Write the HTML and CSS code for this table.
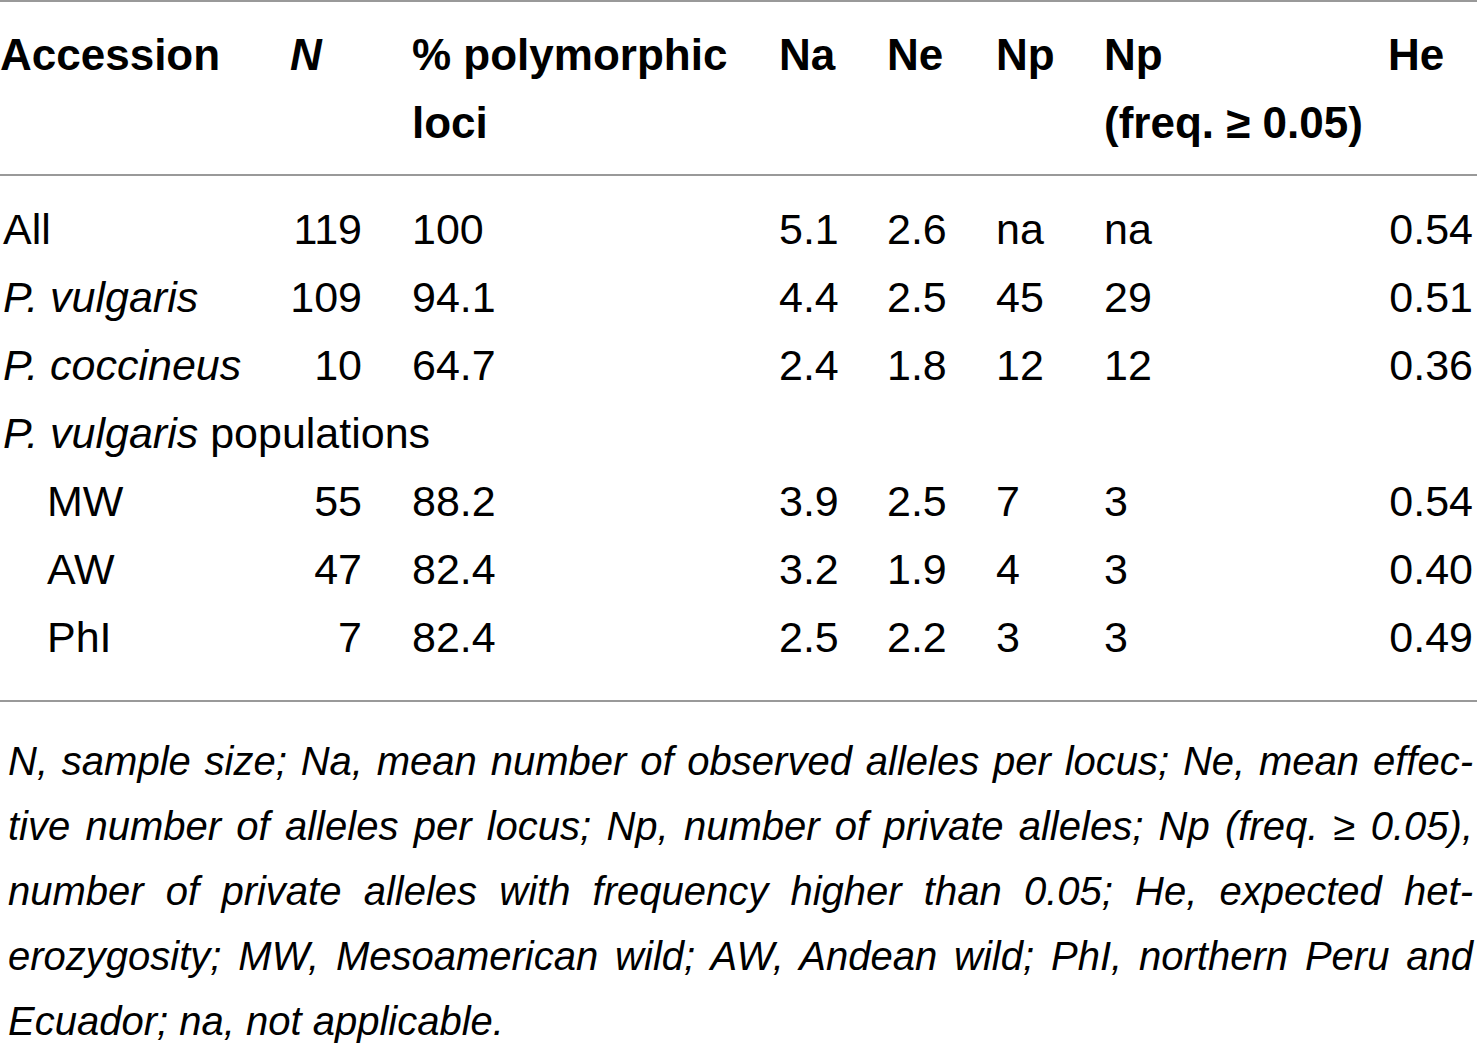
FILE: index.html
```html
<!DOCTYPE html>
<html lang="en">
<head>
    <meta charset="UTF-8">
    <meta name="viewport" content="width=device-width, initial-scale=1.0">
    <title>Genetic diversity by accession</title>
    <link rel="stylesheet" href="styles.css">
</head>
<body>

<table class="stats">
    <colgroup>
        <col class="c-acc">
        <col class="c-n">
        <col class="c-poly">
        <col class="c-na">
        <col class="c-ne">
        <col class="c-np">
        <col class="c-npf">
        <col class="c-he">
    </colgroup>
    <thead>
        <tr>
            <th class="first">Accession</th>
            <th><i>N</i></th>
            <th>% polymorphic<br>loci</th>
            <th>Na</th>
            <th>Ne</th>
            <th>Np</th>
            <th>Np<br>(freq. &ge; 0.05)</th>
            <th>He</th>
        </tr>
    </thead>
    <tbody>
        <tr>
            <td class="first">All</td>
            <td class="num">119</td>
            <td>100</td>
            <td>5.1</td>
            <td>2.6</td>
            <td>na</td>
            <td>na</td>
            <td class="num">0.54</td>
        </tr>
        <tr>
            <td class="first"><i>P. vulgaris</i></td>
            <td class="num">109</td>
            <td>94.1</td>
            <td>4.4</td>
            <td>2.5</td>
            <td>45</td>
            <td>29</td>
            <td class="num">0.51</td>
        </tr>
        <tr>
            <td class="first"><i>P. coccineus</i></td>
            <td class="num">10</td>
            <td>64.7</td>
            <td>2.4</td>
            <td>1.8</td>
            <td>12</td>
            <td>12</td>
            <td class="num">0.36</td>
        </tr>
        <tr>
            <td class="first" colspan="8"><i>P. vulgaris</i> populations</td>
        </tr>
        <tr>
            <td class="first sub">MW</td>
            <td class="num">55</td>
            <td>88.2</td>
            <td>3.9</td>
            <td>2.5</td>
            <td>7</td>
            <td>3</td>
            <td class="num">0.54</td>
        </tr>
        <tr>
            <td class="first sub">AW</td>
            <td class="num">47</td>
            <td>82.4</td>
            <td>3.2</td>
            <td>1.9</td>
            <td>4</td>
            <td>3</td>
            <td class="num">0.40</td>
        </tr>
        <tr>
            <td class="first sub">PhI</td>
            <td class="num">7</td>
            <td>82.4</td>
            <td>2.5</td>
            <td>2.2</td>
            <td>3</td>
            <td>3</td>
            <td class="num">0.49</td>
        </tr>
    </tbody>
</table>

<p class="note">N, sample size; Na, mean number of observed alleles per locus; Ne, mean effec&shy;tive number of alleles per locus; Np, number of private alleles; Np (freq.&nbsp;&ge; 0.05), number of private alleles with frequency higher than 0.05; He, expected het&shy;erozygosity; MW, Mesoamerican wild; AW, Andean wild; PhI, northern Peru and Ecuador; na, not applicable.</p>

</body>
</html>
```

FILE: styles.css
```css
body {
    font-family: "Liberation Sans", Arial, sans-serif;
    background-color: #fff;
    color: #000;
    margin: 0;
    padding: 0;
}

.stats {
    width: 1477px;
    border-collapse: collapse;
    table-layout: fixed;
    font-size: 43px;
}

.c-acc { width: 290px; }
.c-n { width: 122px; }
.c-poly { width: 367px; }
.c-na { width: 108px; }
.c-ne { width: 109px; }
.c-np { width: 108px; }
.c-npf { width: 284px; }
.c-he { width: 89px; }

.stats th,
.stats td {
    padding: 0;
    text-align: left;
    vertical-align: top;
    white-space: nowrap;
}

.stats thead tr {
    border-top: 2px solid #999;
    border-bottom: 2px solid #999;
}

.stats th {
    font-size: 44px;
    font-weight: bold;
    line-height: 68px;
    padding-top: 19px;
    padding-bottom: 17px;
}

.stats td {
    line-height: 68px;
}

.stats tbody tr:first-child td {
    padding-top: 19px;
}

.stats tbody tr:last-child td {
    padding-bottom: 29px;
}

.stats tbody {
    border-bottom: 2px solid #999;
}

.stats td.first {
    padding-left: 3px;
}

.stats td.sub {
    padding-left: 47px;
}

.stats td.num {
    text-align: right;
    padding-right: 50px;
}

.stats td:last-child.num {
    padding-right: 4px;
}

.note {
    margin: 0;
    padding: 27px 4px 0 8px;
    font-size: 40px;
    font-style: italic;
    line-height: 65px;
    text-align: justify;
    hyphens: manual;
}
```
